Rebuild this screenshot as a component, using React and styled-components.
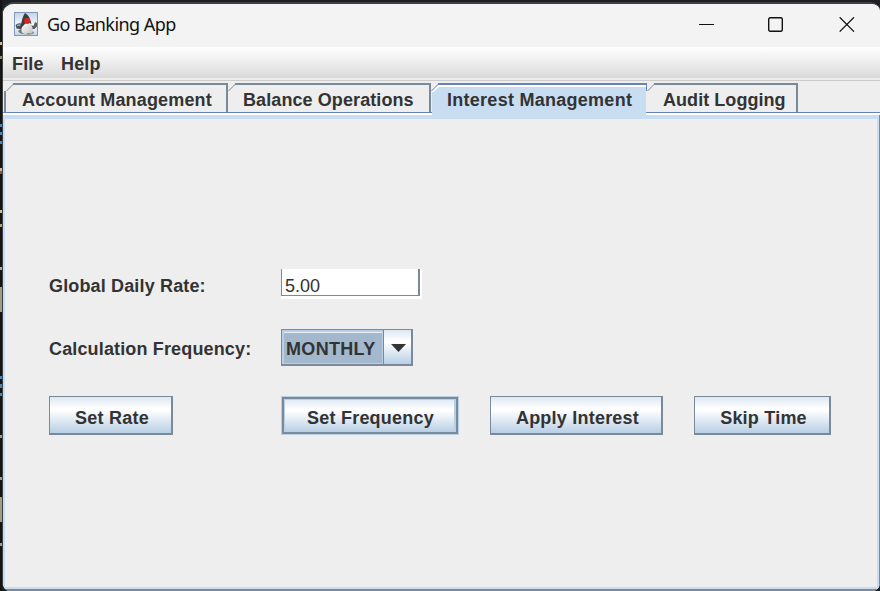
import React from "react";
import styled, { createGlobalStyle, css } from "styled-components";

const c = {
  slate: "#7a8a99",
  blue: "#6382bf",
  pale: "#c8ddf2",
  ring: "#b8cfe5",
  panel: "#eeeeee",
  text: "#333333",
};

/* Editor text peeking out behind the window: [top, bottom, colour] */
const specks = [
  [42, 45, "#c9bf8c"], [56, 59, "#8f8b68"], [124, 127, "#4a86b8"],
  [132, 135, "#4a86b8"], [141, 144, "#4a86b8"], [168, 171, "#c9b9a0"],
  [171, 174, "#8b5a30"], [210, 213, "#c9bf8c"], [224, 227, "#aaa37c"],
  [267, 270, "#a8a8a8"], [287, 312, "#a09d84"], [376, 379, "#4a86b8"],
  [384, 388, "#4a86b8"], [393, 396, "#4a86b8"], [435, 438, "#a09d90"],
  [477, 480, "#a09d90"], [497, 522, "#a09d84"], [543, 546, "#a09d90"],
];
const speckStops = specks
  .map(([a, b, k]) => `#151515 ${a}px, ${k} ${a}px, ${k} ${b}px, #151515 ${b}px`)
  .join(", ");

const Global = createGlobalStyle`
  *, *::before, *::after { box-sizing: border-box; }
  html, body { margin: 0; overflow: hidden; }
  button, input { font: inherit; color: inherit; margin: 0; padding: 0; outline: none; }
`;

const Desktop = styled.div`
  width: 880px;
  height: 591px;
  display: flex;
  padding: 2px 0 0 2px;
  background: linear-gradient(${speckStops}, #151515 591px) 0 0 / 2px 591px no-repeat, #1d1f22;
  font: bold 18px/20px "Liberation Sans", Arial, sans-serif;
  color: ${c.text};
`;

const Window = styled.div`
  flex: 1;
  display: flex;
  flex-direction: column;
  overflow: hidden;
  border: solid #3d3f40;
  border-width: 2px 0 0 1px;
  border-radius: 12px 9px 8px 8px;
  background: ${c.panel};
`;

const TitleBar = styled.header`
  height: 43px;
  flex: none;
  display: flex;
  align-items: center;
  padding: 0 0 3px 11px;
  background: #f3f3f3;
`;

const AppTitle = styled.h1`
  flex: 1;
  margin: 0 0 0 9px;
  font: 400 18px/24px "Noto Sans", sans-serif;
  letter-spacing: -0.54px;
  color: #111;
`;

const Controls = styled.div`
  display: flex;
  padding-right: 25px;
`;

const Control = styled.button`
  border: 0;
  background: none;
  display: flex;
  margin-left: ${(p) => p.$gap}px;
`;

const MenuBar = styled.nav`
  height: 34px;
  flex: none;
  display: flex;
  gap: 17.4px;
  padding: 7px 9px 0;
  border-bottom: 1px solid #cccccc;
  background: linear-gradient(#ffffff, #dadada) 0 0 / 100% 31px no-repeat, ${c.panel};
`;

const MenuItem = styled.span`
  white-space: nowrap;
  letter-spacing: 0.15px;
`;

const TabStrip = styled.div`
  height: 32px;
  flex: none;
  display: flex;
  padding: 2px 0 0 1px;
  border-bottom: 1px solid ${c.blue};
`;

const TabButton = styled.button`
  position: relative;
  display: flex;
  align-items: flex-start;
  flex: none;
  width: ${(p) => p.$width}px;
  height: 29px;
  border: 0;
  background: none;
  white-space: nowrap;
  padding: 7px 0 0 ${(p) => p.$inset}px;
  letter-spacing: ${(p) => p.$spacing}px;
  border-right: 2px solid ${c.slate};

  &::before {
    content: "";
    position: absolute;
    top: 0;
    left: ${(p) => p.$edge}px;
    right: 0;
    height: 2px;
    background: ${c.slate};
  }

  ${(p) =>
    p.$first &&
    css`
      background: linear-gradient(${c.slate}, ${c.slate}) 0 8px / 2px 21px no-repeat;
    `}

  ${(p) =>
    p.$selected &&
    css`
      height: 33px;
      z-index: 1;
      border-right: 0;
      background:
        linear-gradient(${c.pale}, ${c.pale}) 1px 8px / 214px 25px no-repeat,
        linear-gradient(${c.pale}, ${c.pale}) 7px 4px / 208px 5px no-repeat;
      &::before {
        background: ${c.blue};
        box-shadow: 0 2px 0 #fff;
      }
      &::after {
        content: "";
        position: absolute;
        top: 0;
        right: 0;
        width: 1px;
        height: 8px;
        background: ${c.blue};
      }
    `}
`;

const Corner = styled.svg`
  position: absolute;
  top: 0;
  left: ${(p) => p.$left}px;
`;

const PaneFrame = styled.section`
  flex: 1;
  display: flex;
  flex-direction: column;
  padding: 2px 0;
  background: linear-gradient(#fff, #fff) 0 0 / 100% 2px no-repeat, ${c.slate};
`;

const Pane = styled.main`
  flex: 1;
  border: solid ${c.pale};
  border-width: 4px 2px 2px;
  margin-right: 1px;
  padding: 149px 0 0 44px;
  background: ${c.panel};
`;

const Form = styled.div`
  display: grid;
  grid-template-columns: 232px 209px 204px 138px;
  grid-template-rows: 31px 37px 40px;
  row-gap: 30px;
`;

const Label = styled.label`
  align-self: center;
  white-space: nowrap;
  letter-spacing: 0.15px;
  padding-top: ${(p) => p.$drop || 0}px;
`;

const FieldFrame = styled.div`
  align-self: end;
  width: 141px;
  height: 30px;
  background: linear-gradient(${c.slate}, ${c.slate}) 0 0 / 1px 27px no-repeat, #fff;
  padding-left: 1px;
  display: flex;
`;

const RateInput = styled.input`
  width: 138px;
  height: 27px;
  border: solid ${c.slate};
  border-width: 0 2px 1px 0;
  background: transparent;
  font-weight: 400;
  line-height: 18px;
  padding: 8px 0 0 3px;
`;

const Combo = styled.div`
  width: 132px;
  height: 37px;
  display: flex;
  border: solid ${c.slate};
  border-width: 1px 2px 2px 1px;
`;

const ComboValue = styled.div`
  width: 101px;
  padding: 7px 0 0 2px;
  border: 2px solid ${c.ring};
  border-width: 2px 1px 1px 2px;
  box-shadow: inset 0 1px 0 #e8eef4;
  background: #a3b8cc;
  letter-spacing: 0.32px;
`;

const metal = css`
  background: linear-gradient(#dde8f3 0%, #ffffff 32%, #ffffff 36%, #b8cfe5 100%);
`;

const ComboArrow = styled.button`
  flex: 1;
  border: 0;
  border-left: 1px solid ${c.slate};
  ${metal}
  display: grid;
  place-items: center;
  padding: 2px 0 0 1px;
`;

const Button = styled.button`
  width: ${(p) => p.$width}px;
  height: 39px;
  border: solid ${c.slate};
  border-width: 1px 2px 2px 1px;
  ${metal}
  white-space: nowrap;
  letter-spacing: 0.22px;
  padding: 5px 0 0 3px;
  ${(p) =>
    p.$focused &&
    css`
      margin: 1px;
      height: 37px;
      border-width: 2px;
      padding: 5px 0 0 1px;
      box-shadow: 0 0 0 1px ${c.ring}, inset 0 0 0 1px ${c.ring}, inset -1px 0 0 1px ${c.ring};
    `}
`;

function DukeIcon() {
  return (
    <svg width="24" height="24" viewBox="0 0 24 24">
      <defs>
        <linearGradient id="tile" x1="0" y1="0" x2="0" y2="1">
          <stop offset="0" stopColor="#c3d2e6" />
          <stop offset="0.55" stopColor="#f6f9fd" />
          <stop offset="1" stopColor="#c3d3e6" />
        </linearGradient>
        <linearGradient id="body" x1="0" y1="0" x2="1" y2="1">
          <stop offset="0" stopColor="#ffffff" />
          <stop offset="1" stopColor="#c4c4c0" />
        </linearGradient>
      </defs>
      <rect x=".5" y=".5" width="23" height="23" fill="url(#tile)" stroke="#7f98b8" />
      <path d="M1.5 13 Q4 10.5 7.5 11.5 L9 14 L8 17.5 L2.5 16.5Z" fill="#4a5056" />
      <path d="M3 13.5 L6.5 13" stroke="#86b2d6" strokeWidth="1.6" />
      <path d="M17 13 L19.5 14 L21 10 L23 11 V14.5 L20.5 17 L17.5 17Z" fill="#5c6062" />
      <path d="M4 19 Q6 22.5 12 22.3 Q19 23 20 20.5 L16 17 L8 16Z" fill="#77797a" />
      <path d="M9.5 10 L16.5 10 Q19 16 18.8 20 Q17.5 22.6 14.5 21 Q10.5 23 8 20.5 Q6.5 17 9.5 10Z" fill="url(#body)" />
      <path d="M11 1 Q15.5 3 17.5 12 L13 9.5 L10 13 L6.5 16.5 Q7.5 6 11 1Z" fill="#3a3e42" />
      <circle cx="13.2" cy="9" r="3" fill="#e3231c" />
    </svg>
  );
}

function TabCorner({ left, selected }) {
  return (
    <Corner $left={left} width="8" height="9" viewBox="0 0 8 9">
      {selected && <path d="M1 9 L8 2 V9Z" fill={c.pale} />}
      {selected && <path d="M1 9.3 L8 2.6" stroke="#fff" strokeWidth="1.8" />}
      <path d="M.5 8 L7.5 1" stroke={selected ? c.blue : c.slate} fill="none" />
    </Corner>
  );
}

const tabs = [
  { label: "Account Management", width: 224, inset: 18, edge: 9, corner: 2, first: true, spacing: 0.16 },
  { label: "Balance Operations", width: 203, inset: 15, edge: 7, corner: 0, spacing: 0.09 },
  { label: "Interest Management", width: 216, inset: 16, edge: 7, corner: 0, selected: true, spacing: 0.27 },
  { label: "Audit Logging", width: 151, inset: 16, edge: 7, corner: 0, spacing: 0.05 },
];

export default function App() {
  return (
    <Desktop>
      <Global />
      <Window>
        <TitleBar>
          <DukeIcon />
          <AppTitle>Go Banking App</AppTitle>
          <Controls>
            <Control aria-label="Minimize" $gap={0}>
              <svg width="15" height="15"><path d="M0 7.5H15" stroke="#111" /></svg>
            </Control>
            <Control aria-label="Maximize" $gap={54}>
              <svg width="15" height="15"><rect x=".7" y=".7" width="13.6" height="13.6" rx="1.5" fill="none" stroke="#111" strokeWidth="1.4" /></svg>
            </Control>
            <Control aria-label="Close" $gap={56}>
              <svg width="16" height="15"><path d="M.7.3 L15 14.6 M15 .3 L.7 14.6" stroke="#111" strokeWidth="1.3" /></svg>
            </Control>
          </Controls>
        </TitleBar>
        <MenuBar>
          <MenuItem>File</MenuItem>
          <MenuItem>Help</MenuItem>
        </MenuBar>
        <TabStrip>
          {tabs.map((t) => (
            <TabButton
              key={t.label}
              $width={t.width}
              $inset={t.inset}
              $edge={t.edge}
              $first={t.first}
              $selected={t.selected}
              $spacing={t.spacing}
            >
              <TabCorner left={t.corner} selected={t.selected} />
              {t.label}
            </TabButton>
          ))}
        </TabStrip>
        <PaneFrame>
          <Pane>
            <Form>
              <Label $drop={4}>Global Daily Rate:</Label>
              <FieldFrame><RateInput defaultValue="5.00" /></FieldFrame>
              <span />
              <span />
              <Label $drop={2}>Calculation Frequency:</Label>
              <Combo>
                <ComboValue>MONTHLY</ComboValue>
                <ComboArrow aria-label="Open">
                  <svg width="15" height="8"><path d="M0 0H15L7.5 8Z" fill="#333" /></svg>
                </ComboArrow>
              </Combo>
              <span />
              <span />
              <Button $width={124}>Set Rate</Button>
              <Button $width={176} $focused>Set Frequency</Button>
              <Button $width={173}>Apply Interest</Button>
              <Button $width={137}>Skip Time</Button>
            </Form>
          </Pane>
        </PaneFrame>
      </Window>
    </Desktop>
  );
}
